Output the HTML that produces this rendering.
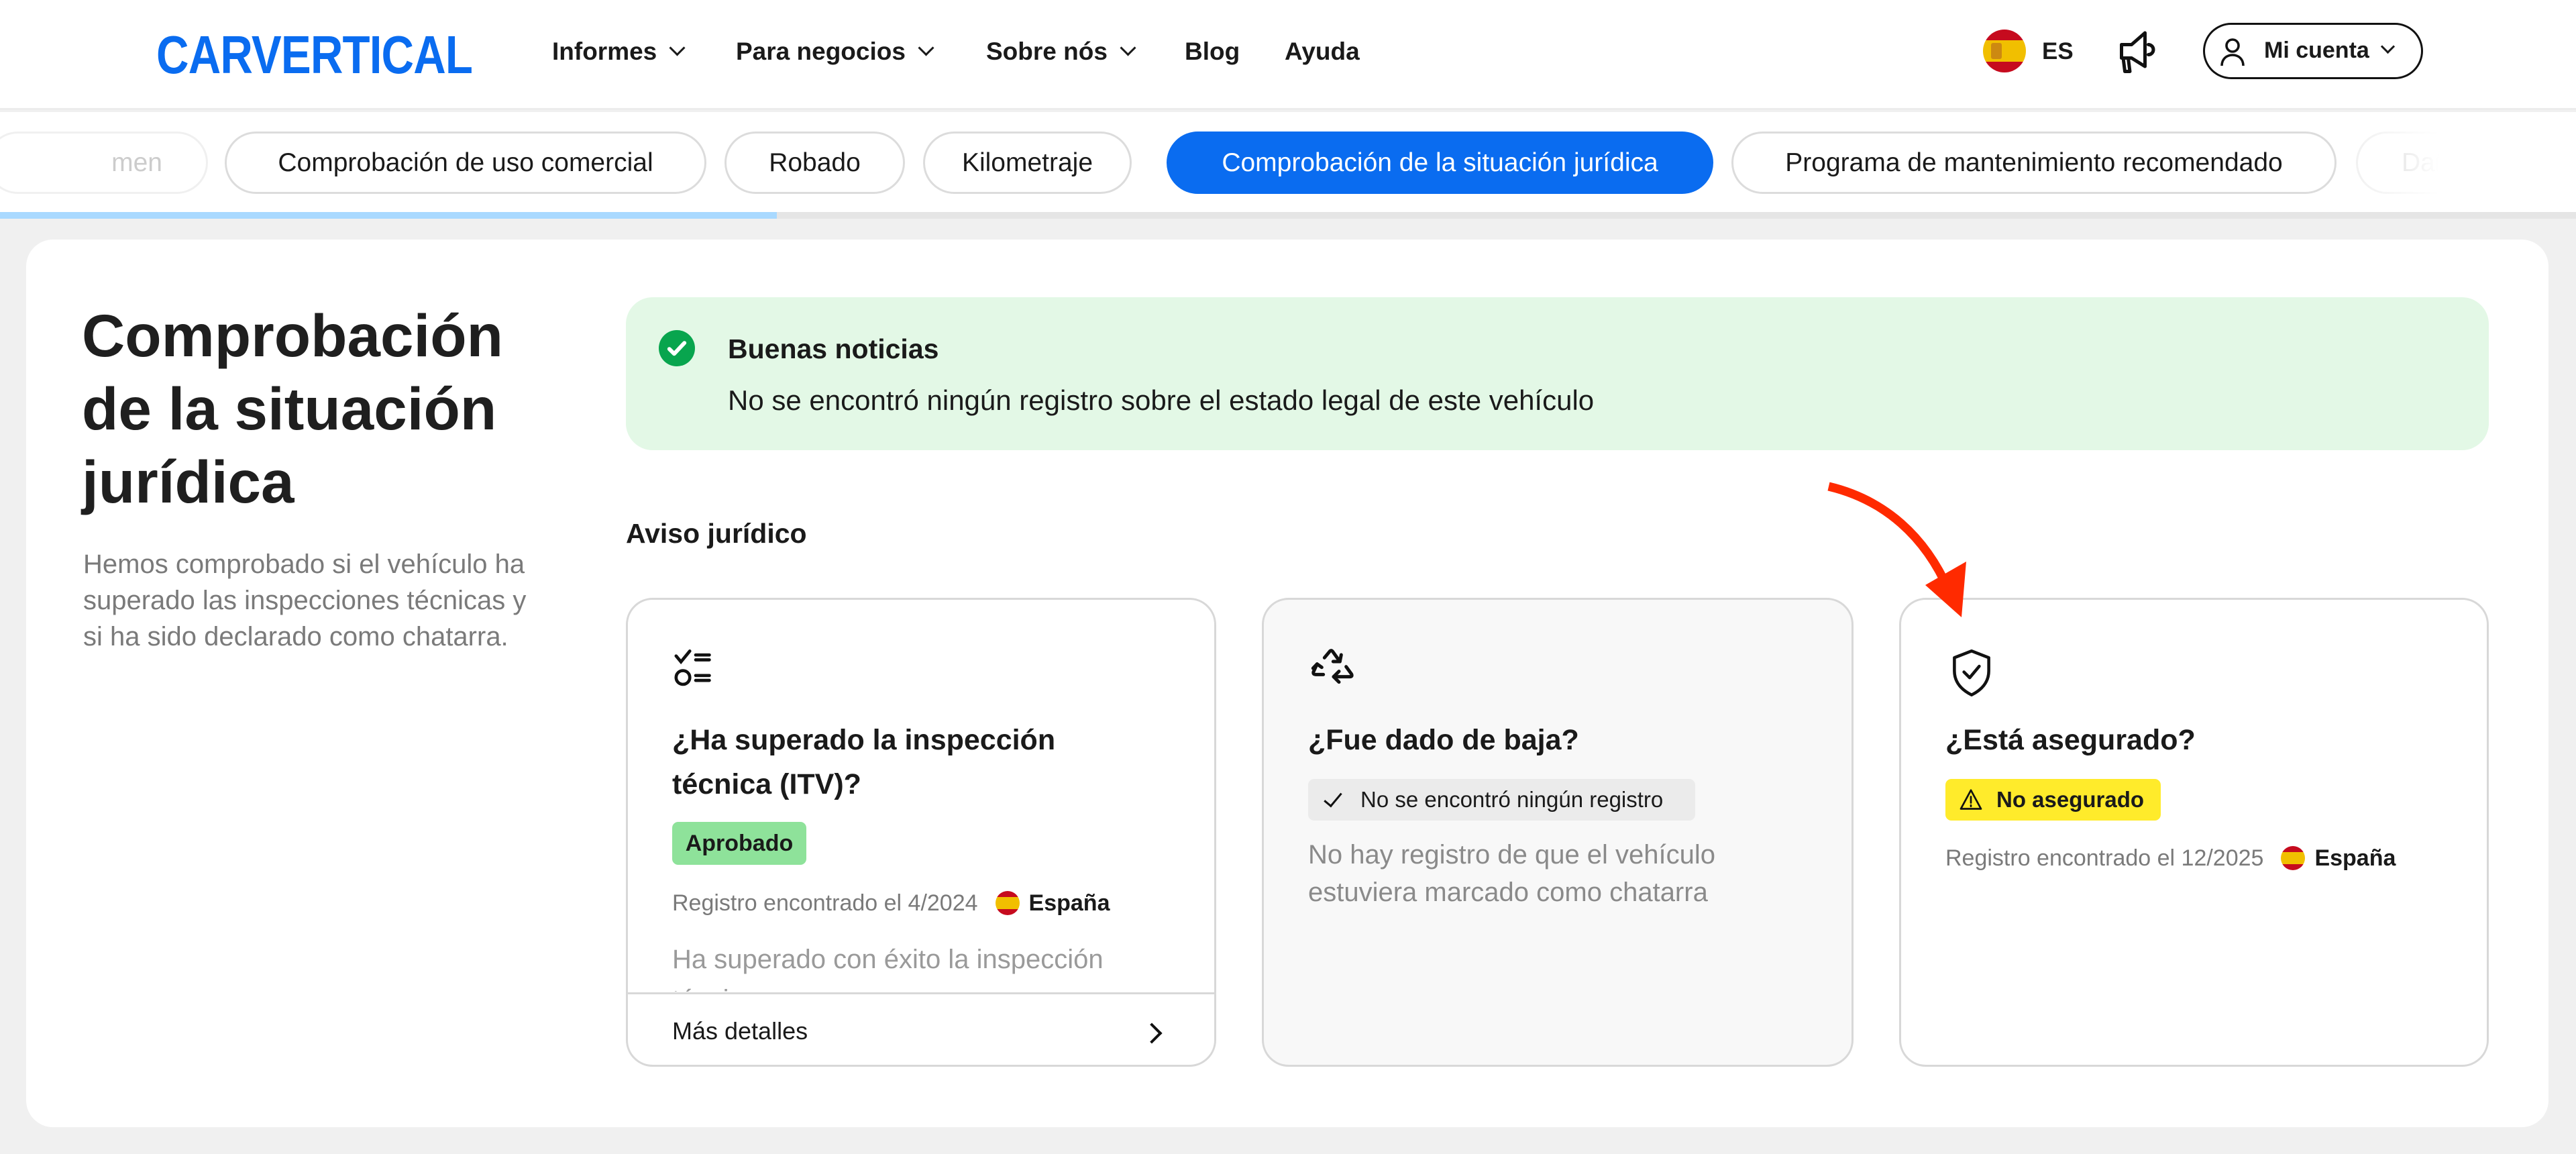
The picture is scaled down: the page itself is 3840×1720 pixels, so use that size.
<!DOCTYPE html>
<html><head><meta charset="utf-8"><style>
*{box-sizing:border-box;margin:0;padding:0}
body{width:3840px;height:1720px;background:#f0f0f0;font-family:"Liberation Sans",Arial,sans-serif;color:#1a1a1a;position:relative;overflow:hidden}
.a{position:absolute;white-space:nowrap}
.nav{font-weight:bold;font-size:37px;top:56px}
.chev{display:inline-block;width:17px;height:17px;border-right:3px solid #1a1a1a;border-bottom:3px solid #1a1a1a;transform:rotate(45deg);margin-left:22px;position:relative;top:-9px}
.tab{top:196px;height:93px;border:3px solid #dcdcdc;border-radius:47px;font-size:39px;line-height:87px;text-align:center;background:#fff}
.card{top:891px;height:699px;border:3px solid #d8d8d8;border-radius:40px;background:#fff;overflow:hidden}
.ct{font-weight:bold;font-size:43px;line-height:66px;left:66px}
.reg{font-size:34px;color:#7a7a7a}
.reg b{color:#1a1a1a}
.flag{display:inline-block;width:36px;height:36px;border-radius:50%;background:linear-gradient(#c60b1e 0 25%,#f1bf00 25% 75%,#c60b1e 75%);vertical-align:-7px;margin:0 14px 0 26px}
</style></head><body>
<!-- header -->
<div class="a" style="left:0;top:0;width:3840px;height:164px;background:#fff;border-bottom:3px solid #ececec"></div>
<div class="a" style="left:233px;top:36px;font-weight:bold;font-size:80px;color:#0a6cf0;transform:scaleX(0.84);transform-origin:left;letter-spacing:-1px">CARVERTICAL</div>
<div class="a nav" style="left:823px">Informes<span class="chev"></span></div>
<div class="a nav" style="left:1097px">Para negocios<span class="chev"></span></div>
<div class="a nav" style="left:1470px">Sobre nós<span class="chev"></span></div>
<div class="a nav" style="left:1766px">Blog</div>
<div class="a nav" style="left:1915px">Ayuda</div>
<div class="a" style="left:2956px;top:44px;width:64px;height:64px;border-radius:50%;background:linear-gradient(#c60b1e 0 25%,#f1bf00 25% 75%,#c60b1e 75%)"></div>
<div class="a" style="left:2968px;top:64px;width:16px;height:24px;background:#b5651d;border-radius:3px;opacity:.6"></div>
<div class="a nav" style="left:3044px;font-size:35px;top:57px">ES</div>
<svg class="a" style="left:3155px;top:44px" width="60" height="70" viewBox="0 0 24 28" fill="none" stroke="#111" stroke-width="2" stroke-linejoin="round" stroke-linecap="round"><path d="M3 9h6l8-7v20l-8-5H3z"/><path d="M4 17l1 8h3l-1-8"/><path d="M19 9a3 3 0 010 6"/></svg>
<div class="a" style="left:3284px;top:34px;width:328px;height:84px;border:3px solid #111;border-radius:42px"></div>
<svg class="a" style="left:3308px;top:56px" width="40" height="42" viewBox="0 0 20 21" fill="none" stroke="#111" stroke-width="1.8"><circle cx="10" cy="6" r="4.5"/><path d="M2 21c0-5 3.5-8 8-8s8 3 8 8"/></svg>
<div class="a nav" style="left:3375px;top:56px;font-size:34px">Mi cuenta<span class="chev" style="width:15px;height:15px;margin-left:20px"></span></div>
<!-- tabs -->
<div class="a" style="left:0;top:167px;width:3840px;height:149px;background:#fff"></div>
<div class="tab a" style="left:-20px;width:330px;color:#ccc;border-color:#f0f0f0;text-align:right;padding-right:65px">men</div>
<div class="tab a" style="left:335px;width:718px">Comprobación de uso comercial</div>
<div class="tab a" style="left:1080px;width:269px">Robado</div>
<div class="tab a" style="left:1376px;width:311px">Kilometraje</div>
<div class="tab a" style="left:1739px;width:815px;background:#0a6cf0;border-color:#0a6cf0;color:#fff">Comprobación de la situación jurídica</div>
<div class="tab a" style="left:2581px;width:902px">Programa de mantenimiento recomendado</div>
<div class="tab a" style="left:3512px;width:400px;color:#ccc;border-color:#f0f0f0;text-align:left;padding-left:65px">Dañ</div>
<div class="a" style="left:3500px;top:190px;width:340px;height:110px;background:linear-gradient(90deg,rgba(255,255,255,0),#fff 40%)"></div>
<div class="a" style="left:0;top:316px;width:3840px;height:10px;background:#e5e5e5"></div>
<div class="a" style="left:0;top:316px;width:1158px;height:10px;background:#a9d9ff"></div>
<!-- main card -->
<div class="a" style="left:39px;top:357px;width:3760px;height:1323px;background:#fff;border-radius:40px"></div>
<div class="a" style="left:122px;top:446px;font-weight:bold;font-size:89px;line-height:109px;color:#1f1f1f">Comprobación<br>de la situación<br>jurídica</div>
<div class="a" style="left:124px;top:814px;font-size:40px;line-height:54px;color:#7a7a7a">Hemos comprobado si el vehículo ha<br>superado las inspecciones técnicas y<br>si ha sido declarado como chatarra.</div>
<!-- green -->
<div class="a" style="left:933px;top:443px;width:2777px;height:228px;background:#e3f8e6;border-radius:40px"></div>
<svg class="a" style="left:982px;top:492px" width="54" height="54" viewBox="0 0 24 24"><circle cx="12" cy="12" r="12" fill="#08a54e"/><path d="M7 12.5l3.2 3.2L17 8.5" fill="none" stroke="#fff" stroke-width="2.6" stroke-linecap="round" stroke-linejoin="round"/></svg>
<div class="a" style="left:1085px;top:497px;font-weight:bold;font-size:41px">Buenas noticias</div>
<div class="a" style="left:1085px;top:573px;font-size:42px">No se encontró ningún registro sobre el estado legal de este vehículo</div>
<div class="a" style="left:933px;top:772px;font-weight:bold;font-size:41px">Aviso jurídico</div>
<!-- card1 -->
<div class="card a" style="left:933px;width:880px">
 <svg class="a" style="left:66px;top:72px" width="70" height="70" viewBox="0 0 24 24" fill="none" stroke="#111" stroke-width="1.6" stroke-linecap="round"><path d="M2 4l2.5 3L9 1.5"/><path d="M12 3.5h7M12 6h7"/><circle cx="5.5" cy="15" r="3.5"/><path d="M12 14h7M12 16.5h7"/></svg>
 <div class="a ct" style="top:176px">¿Ha superado la inspección<br>técnica (ITV)?</div>
 <div class="a" style="left:66px;top:331px;width:200px;height:64px;background:#8ee29a;border-radius:9px;font-weight:bold;font-size:34px;line-height:64px;text-align:center">Aprobado</div>
 <div class="a reg" style="left:66px;top:433px">Registro encontrado el 4/2024<span class="flag"></span><b>España</b></div>
 <div class="a" style="left:66px;top:506px;font-size:40px;color:#9a9a9a;line-height:60px;height:78px;overflow:hidden">Ha superado con éxito la inspección<br>técnica</div>
 <div class="a" style="left:0;top:585px;width:880px;height:3px;background:#d8d8d8"></div>
 <div class="a" style="left:66px;top:622px;font-size:36px">Más detalles</div>
 <div class="a" style="left:770px;top:635px;width:22px;height:22px;border-right:4px solid #111;border-top:4px solid #111;transform:rotate(45deg)"></div>
</div>
<!-- card2 -->
<div class="card a" style="left:1881px;width:882px;background:#f8f8f8">
 <svg class="a" style="left:62px;top:68px" width="80" height="80" viewBox="0 0 24 24" fill="none" stroke="#111" stroke-width="1.5" stroke-linecap="round" stroke-linejoin="round"><path d="M8.5 5.5L11 2.5Q11.6 2 12.1 2.6L15.4 7.2"/><path d="M12.4 7.2H15.4L16 4.2"/><path d="M5.2 8.3L3.6 11.8Q3.3 13 4.6 13H8"/><path d="M3.4 10.2L5.2 8.3L7.3 9.8"/><path d="M18.2 9.5L20.6 12.8Q21.1 14 19.9 14H12.6"/><path d="M15 11.6L12.6 14L15 16.4"/></svg>
 <div class="a ct" style="top:176px">¿Fue dado de baja?</div>
 <div class="a" style="left:66px;top:267px;width:577px;height:62px;background:#ebebeb;border-radius:9px;font-size:33px;line-height:62px;padding-left:78px">No se encontró ningún registro</div>
 <div class="a" style="left:96px;top:282px;width:14px;height:26px;border-right:3px solid #111;border-bottom:3px solid #111;transform:rotate(40deg)"></div>
 <div class="a" style="left:66px;top:352px;font-size:40px;color:#8a8a8a;line-height:56px">No hay registro de que el vehículo<br>estuviera marcado como chatarra</div>
</div>
<!-- card3 -->
<div class="card a" style="left:2831px;width:879px">
 <svg class="a" style="left:70px;top:72px" width="70" height="74" viewBox="0 0 24 26" fill="none" stroke="#111" stroke-width="1.6" stroke-linejoin="round" stroke-linecap="round"><path d="M12 1.5l9 3.5v7c0 6-4 10-9 12.5C7 22 3 18 3 12V5z"/><path d="M8 12.5l3 3 5-6"/></svg>
 <div class="a ct" style="top:176px">¿Está asegurado?</div>
 <div class="a" style="left:66px;top:267px;width:321px;height:62px;background:#ffeb2b;border-radius:9px;font-weight:bold;font-size:33px;line-height:62px;padding-left:76px">No asegurado</div>
 <svg class="a" style="left:86px;top:280px" width="36" height="36" viewBox="0 0 24 24" fill="none" stroke="#111" stroke-width="1.8" stroke-linejoin="round"><path d="M12 2.5L22 21H2z"/><path d="M12 9v6M12 17.5v1" stroke-linecap="round"/></svg>
 <div class="a reg" style="left:66px;top:366px">Registro encontrado el 12/2025<span class="flag"></span><b>España</b></div>
</div>
<!-- arrow -->
<svg class="a" style="left:0;top:0" width="3840" height="1720"><path d="M2726 725 C2810 745 2870 800 2905 880" fill="none" stroke="#ff2a00" stroke-width="13" stroke-linecap="butt"/><path d="M2870 872 L2931 837 L2924 920 Z" fill="#ff2a00"/></svg>
</body></html>
